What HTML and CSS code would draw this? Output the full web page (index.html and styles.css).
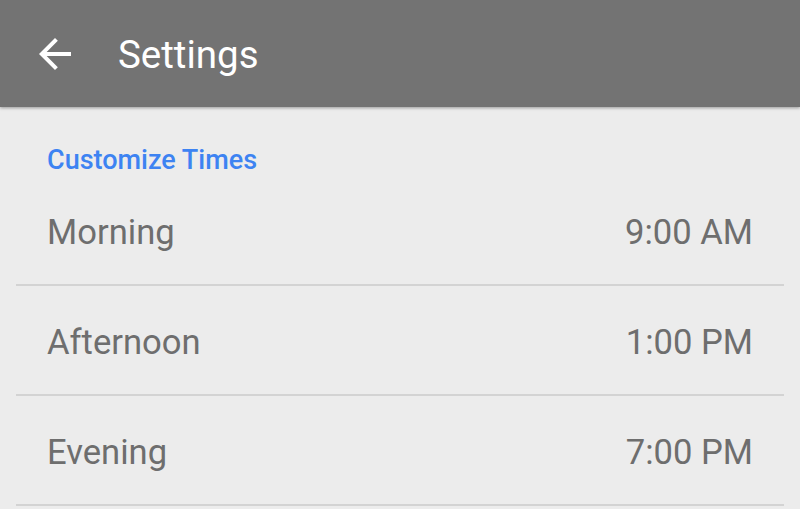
FILE: index.html
```html
<!DOCTYPE html>
<html>
<head>
<meta charset="utf-8">
<link rel="stylesheet" href="styles.css">
</head>
<body>
<header class="appbar">
  <button class="back" aria-label="Back">
    <svg viewBox="0 0 24 24" width="48" height="48"><path fill="#fff" d="M20 11H7.83l5.59-5.59L12 4l-8 8 8 8 1.41-1.41L7.83 13H20v-2z"/></svg>
  </button>
  <h1 class="title">Settings</h1>
</header>
<main class="content">
  <div class="section-label">Customize Times</div>
  <ul class="list">
    <li class="row"><span class="name">Morning</span><span class="value">9:00 AM</span></li>
    <li class="row"><span class="name">Afternoon</span><span class="value">1:00 PM</span></li>
    <li class="row"><span class="name">Evening</span><span class="value">7:00 PM</span></li>
  </ul>
</main>
</body>
</html>
```
FILE: styles.css
```css
html, body {
  margin: 0;
  padding: 0;
  background: #ececec;
  font-family: Roboto, "Liberation Sans", sans-serif;
  overflow: hidden;
}
.appbar {
  height: 107px;
  background: #737373;
  display: flex;
  align-items: center;
  box-shadow: 0 1px 3px rgba(0,0,0,0.35);
  position: relative;
  z-index: 1;
}
.back {
  width: 48px;
  height: 48px;
  margin-left: 31px;
  padding: 0;
  border: 0;
  background: none;
  display: flex;
}
.title {
  margin: 0 0 0 39px;
  color: #fff;
  font-size: 38.5px;
  font-weight: 400;
  line-height: 1;
  padding-top: 3px;
}
.content {
  padding: 0 16px;
}
.section-label {
  color: #3d83f2;
  font-size: 27px;
  font-weight: 500;
  padding: 37px 0 0 31px;
  height: 32px;
  line-height: 32px;
}
.list {
  list-style: none;
  margin: 0;
  padding: 0;
}
.row {
  height: 108px;
  display: flex;
  align-items: center;
  justify-content: space-between;
  padding: 0 31px 0 31px;
  border-bottom: 2px solid #d3d3d3;
  color: #6e6e6e;
  font-size: 34.6px;
}
.row .name, .row .value {
  padding-top: 3px;
}
```
